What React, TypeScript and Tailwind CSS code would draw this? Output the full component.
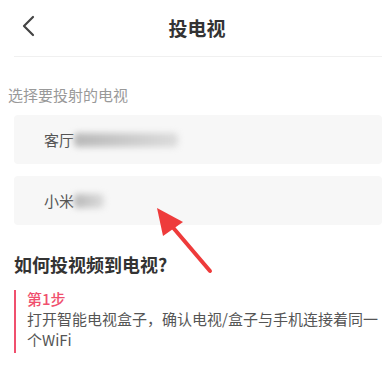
import React from 'react';

const font = { fontFamily: '"Noto Sans CJK SC", "Noto Sans", sans-serif' };

const TvCard: React.FC<{ name: string; blurWidth: string }> = ({ name, blurWidth }) => (
    <div className="h-[49px] ml-[14px] mr-[2px] bg-[#f7f7f7] rounded-[4px] flex items-center pl-[30px]">
        <span className="text-[15px] leading-[20px] text-[#555]">{name}</span>
        <div className={`${blurWidth} h-[14px] bg-gradient-to-r from-[#b8b8b8] to-[#dcdcdc] blur-[3px] rounded-sm`} />
    </div>
);

export default function App() {
    return (
        <div className="relative w-[384px] h-[383px] bg-white overflow-hidden" style={font}>
            <div className="h-[56px] flex items-center justify-center relative">
                <svg className="absolute left-[20px] top-[15px]" width="16" height="22" viewBox="0 0 16 22" fill="none">
                    <path d="M13 2 L4 11 L13 20" stroke="#444" strokeWidth="2.2" strokeLinecap="round" strokeLinejoin="round" />
                </svg>
                <span className="text-[19px] font-bold text-[#333] ml-[10px]">投电视</span>
            </div>
            <div className="h-px bg-[#f0f0f0] ml-[14px] mr-[2px]" />

            <div className="mt-[28px] pl-[8px] text-[15px] leading-[20px] text-[#999]">选择要投射的电视</div>

            <div className="mt-[10px] flex flex-col gap-[12px]">
                <TvCard name="客厅" blurWidth="w-[104px]" />
                <TvCard name="小米" blurWidth="w-[30px]" />
            </div>

            <div className="mt-[27px] pl-[14px] text-[18px] leading-[24px] font-bold text-[#333]">如何投视频到电视?</div>

            <div className="mt-[14px] ml-[14px] border-l-[2px] border-[#f0506e] pl-[11px] pb-[3px]">
                <div className="text-[15px] leading-[18px] font-medium text-[#f0506e]">第1步</div>
                <div className="text-[15px] leading-[21px] text-[#555]">
                    打开智能电视盒子，确认电视/盒子与手机连接着同一<br />个WiFi
                </div>
            </div>

            <svg className="absolute left-0 top-0 pointer-events-none" width="384" height="383" viewBox="0 0 384 383">
                <line x1="210" y1="271" x2="170" y2="224" stroke="#ee3b3b" strokeWidth="4" strokeLinecap="round" />
                <polygon points="157,208 183,222 163,236" fill="#ee3b3b" />
            </svg>
        </div>
    );
}
